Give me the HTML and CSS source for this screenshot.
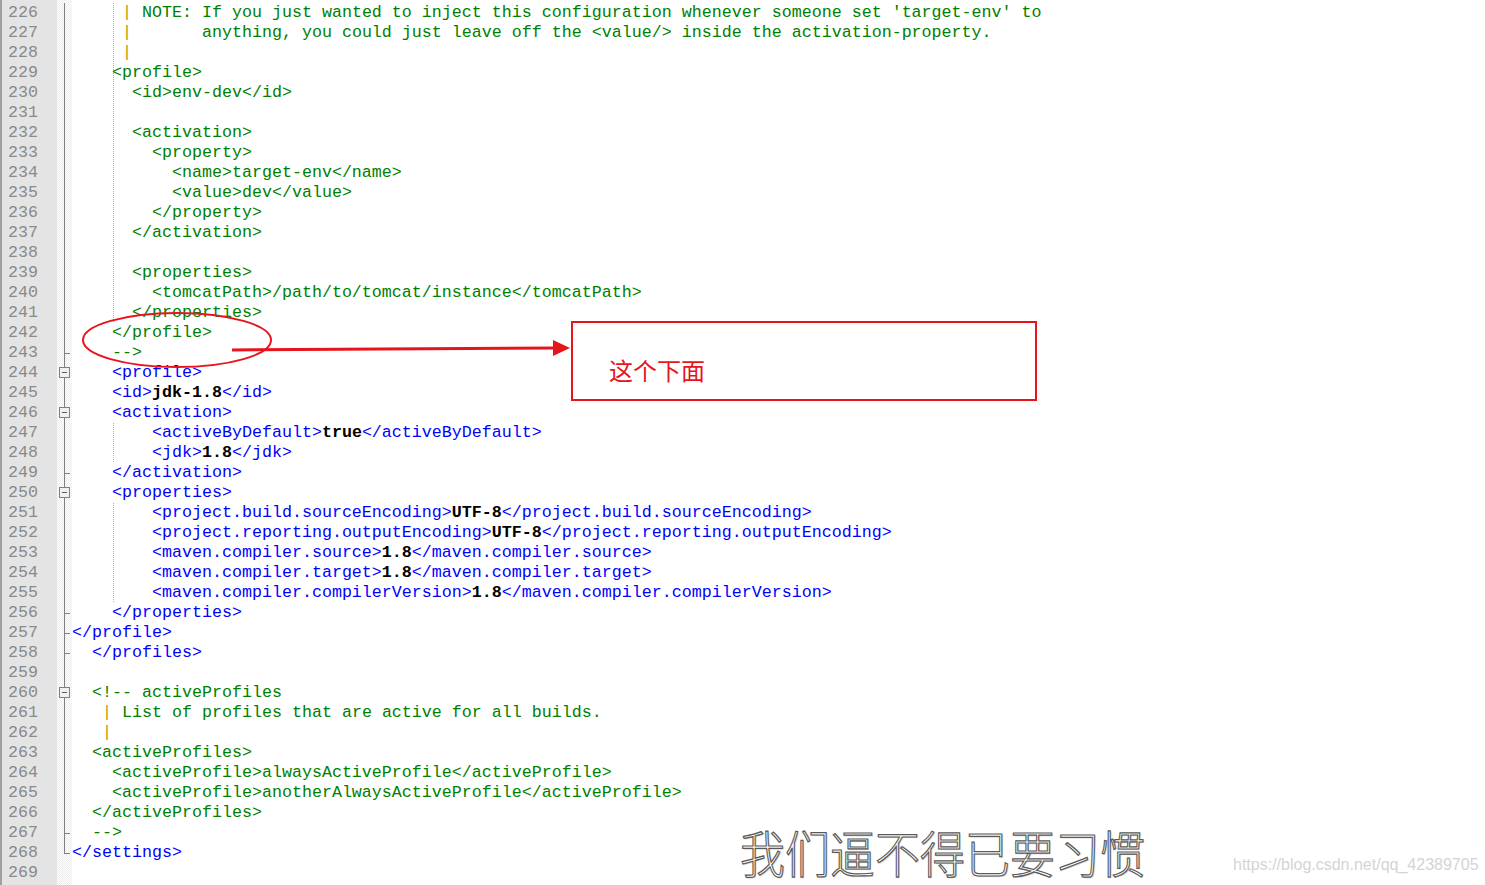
FILE: index.html
```html
<!DOCTYPE html>
<html lang="zh-CN">
<head>
<meta charset="utf-8">
<link rel="stylesheet" href="styles.css">
</head>
<body>
<div class="editor">
    <div class="gutter">
        <div>226</div><div>227</div><div>228</div><div>229</div><div>230</div>
        <div>231</div><div>232</div><div>233</div><div>234</div><div>235</div>
        <div>236</div><div>237</div><div>238</div><div>239</div><div>240</div>
        <div>241</div><div>242</div><div>243</div><div>244</div><div>245</div>
        <div>246</div><div>247</div><div>248</div><div>249</div><div>250</div>
        <div>251</div><div>252</div><div>253</div><div>254</div><div>255</div>
        <div>256</div><div>257</div><div>258</div><div>259</div><div>260</div>
        <div>261</div><div>262</div><div>263</div><div>264</div><div>265</div>
        <div>266</div><div>267</div><div>268</div><div>269</div>
    </div>

    <!-- fold margin -->
    <div class="folds">
        <div class="f"></div><div class="f"></div><div class="f"></div><div class="f"></div>
        <div class="f"></div><div class="f"></div><div class="f"></div><div class="f"></div>
        <div class="f"></div><div class="f"></div><div class="f"></div><div class="f"></div>
        <div class="f"></div><div class="f"></div><div class="f"></div><div class="f"></div>
        <div class="f"></div>
        <div class="f tick"></div>
        <div class="f"><span class="box"></span></div>
        <div class="f"></div>
        <div class="f"><span class="box"></span></div>
        <div class="f"></div>
        <div class="f"></div>
        <div class="f tick"></div>
        <div class="f"><span class="box"></span></div>
        <div class="f"></div><div class="f"></div><div class="f"></div><div class="f"></div><div class="f"></div>
        <div class="f tick"></div>
        <div class="f tick"></div>
        <div class="f tick"></div>
        <div class="f"></div>
        <div class="f"><span class="box"></span></div>
        <div class="f"></div><div class="f"></div><div class="f"></div><div class="f"></div>
        <div class="f"></div><div class="f"></div>
        <div class="f tick"></div>
        <div class="f end"></div>
        <div class="f none"></div>
    </div>

    <div class="code">
        <div class="ln g4 c">     <span class="p">|</span> NOTE: If you just wanted to inject this configuration whenever someone set 'target-env' to</div>
        <div class="ln g4 c">     <span class="p">|</span>       anything, you could just leave off the &lt;value/&gt; inside the activation-property.</div>
        <div class="ln g4 c">     <span class="p">|</span></div>
        <div class="ln g4 c">    &lt;profile&gt;</div>
        <div class="ln g4 c">      &lt;id&gt;env-dev&lt;/id&gt;</div>
        <div class="ln g4 c"></div>
        <div class="ln g4 c">      &lt;activation&gt;</div>
        <div class="ln g4 c">        &lt;property&gt;</div>
        <div class="ln g4 c">          &lt;name&gt;target-env&lt;/name&gt;</div>
        <div class="ln g4 c">          &lt;value&gt;dev&lt;/value&gt;</div>
        <div class="ln g4 c">        &lt;/property&gt;</div>
        <div class="ln g4 c">      &lt;/activation&gt;</div>
        <div class="ln g4 c"></div>
        <div class="ln g4 c">      &lt;properties&gt;</div>
        <div class="ln g4 c">        &lt;tomcatPath&gt;/path/to/tomcat/instance&lt;/tomcatPath&gt;</div>
        <div class="ln g4 c">      &lt;/properties&gt;</div>
        <div class="ln c">    &lt;/profile&gt;</div>
        <div class="ln c">    --&gt;</div>
        <div class="ln t">    &lt;profile&gt;</div>
        <div class="ln t">    &lt;id&gt;<b>jdk-1.8</b>&lt;/id&gt;</div>
        <div class="ln t">    &lt;activation&gt;</div>
        <div class="ln g4 t">        &lt;activeByDefault&gt;<b>true</b>&lt;/activeByDefault&gt;</div>
        <div class="ln g4 t">        &lt;jdk&gt;<b>1.8</b>&lt;/jdk&gt;</div>
        <div class="ln t">    &lt;/activation&gt;</div>
        <div class="ln t">    &lt;properties&gt;</div>
        <div class="ln g4 t">        &lt;project.build.sourceEncoding&gt;<b>UTF-8</b>&lt;/project.build.sourceEncoding&gt;</div>
        <div class="ln g4 t">        &lt;project.reporting.outputEncoding&gt;<b>UTF-8</b>&lt;/project.reporting.outputEncoding&gt;</div>
        <div class="ln g4 t">        &lt;maven.compiler.source&gt;<b>1.8</b>&lt;/maven.compiler.source&gt;</div>
        <div class="ln g4 t">        &lt;maven.compiler.target&gt;<b>1.8</b>&lt;/maven.compiler.target&gt;</div>
        <div class="ln g4 t">        &lt;maven.compiler.compilerVersion&gt;<b>1.8</b>&lt;/maven.compiler.compilerVersion&gt;</div>
        <div class="ln t">    &lt;/properties&gt;</div>
        <div class="ln t">&lt;/profile&gt;</div>
        <div class="ln t">  &lt;/profiles&gt;</div>
        <div class="ln"></div>
        <div class="ln c">  &lt;!-- activeProfiles</div>
        <div class="ln c">   <span class="p">|</span> List of profiles that are active for all builds.</div>
        <div class="ln c">   <span class="p">|</span></div>
        <div class="ln c">  &lt;activeProfiles&gt;</div>
        <div class="ln c">    &lt;activeProfile&gt;alwaysActiveProfile&lt;/activeProfile&gt;</div>
        <div class="ln c">    &lt;activeProfile&gt;anotherAlwaysActiveProfile&lt;/activeProfile&gt;</div>
        <div class="ln c">  &lt;/activeProfiles&gt;</div>
        <div class="ln c">  --&gt;</div>
        <div class="ln t">&lt;/settings&gt;</div>
        <div class="ln"></div>
    </div>
</div>

<!-- red markup drawn over the screenshot -->
<svg class="marks" width="1485" height="885" viewBox="0 0 1485 885">
    <ellipse cx="177" cy="340" rx="94" ry="27" fill="none" stroke="#e8141c" stroke-width="2"/>
    <path d="M232 350 L556 348" stroke="#e8141c" stroke-width="3" fill="none"/>
    <path d="M553 340 L570 348 L553 356 Z" fill="#e8141c"/>
</svg>
<div class="note">这个下面</div>

<div class="stamp">我们逼不得已要习惯</div>
<div class="url">https://blog.csdn.net/qq_42389705</div>
</body>
</html>
```

FILE: styles.css
```css
body {
    margin: 0;
    background-color: #ffffff;
    overflow: hidden;
    font-family: "Liberation Mono", "Courier New", monospace;
    font-size: 16.67px;
}

.editor {
    display: flex;
    height: 100vh;
}

.gutter {
    width: 49px;
    padding-left: 6px;
    padding-top: 3px;
    border-left: 2px solid #a0a0a0;
    background-color: #e4e4e4;
    color: #8a8a8a;
}

.gutter div,
.f,
.ln {
    height: 20px;
    line-height: 20px;
}

.folds {
    width: 15px;
    padding-top: 3px;
    background: repeating-conic-gradient(#ececec 0 25%, #ffffff 0 50%) 0 0 / 2px 2px;
}

.f {
    position: relative;
}

.f::before {
    content: "";
    position: absolute;
    left: 7px;
    top: 0;
    bottom: 0;
    width: 1px;
    background-color: #808080;
}

.f.none::before {
    display: none;
}

.f.end::before {
    bottom: 10px;
}

.f.tick::after,
.f.end::after {
    content: "";
    position: absolute;
    left: 7px;
    top: 10px;
    width: 6px;
    height: 1px;
    background-color: #808080;
}

.box {
    position: absolute;
    left: 2px;
    top: 4px;
    width: 9px;
    height: 9px;
    border: 1px solid #808080;
    background-color: #f0f0f0;
    z-index: 1;
}

.box::after {
    content: "";
    position: absolute;
    left: 2px;
    top: 4px;
    width: 5px;
    height: 1px;
    background-color: #606060;
}

.code {
    flex: 1;
    padding-top: 3px;
}

.ln {
    white-space: pre;
}

.g4 {
    background-image: repeating-linear-gradient(to bottom, #b0b0b0 0 1px, transparent 1px 2px);
    background-size: 1px 100%;
    background-position: 41px 0;
    background-repeat: no-repeat;
}

.c {
    color: #008000;
}

.p {
    color: #c09a00;
}

.t {
    color: #0000ff;
}

.ln b {
    color: #000000;
}

.marks {
    position: absolute;
    left: 0;
    top: 0;
    pointer-events: none;
}

.note {
    position: absolute;
    left: 571px;
    top: 321px;
    width: 426px;
    height: 41px;
    padding: 35px 0 0 36px;
    border: 2px solid #e8141c;
    color: #e8141c;
    font-family: "Noto Sans CJK SC", sans-serif;
    font-size: 24px;
    line-height: 24px;
}

.stamp {
    position: absolute;
    left: 740px;
    top: 824px;
    font-family: "Noto Sans CJK SC", sans-serif;
    font-weight: 300;
    font-size: 45px;
    line-height: 56px;
    color: #ffffff;
    -webkit-text-stroke: 1.1px #5a5a5a;
    text-shadow: 1px 1px 1px #c8c8c8;
    transform: scaleY(1.12);
    transform-origin: 0 50%;
}

.url {
    position: absolute;
    left: 1233px;
    top: 856px;
    font-family: "Liberation Sans Narrow", "Liberation Sans", sans-serif;
    font-size: 16px;
    color: #d4d4d4;
}
```
